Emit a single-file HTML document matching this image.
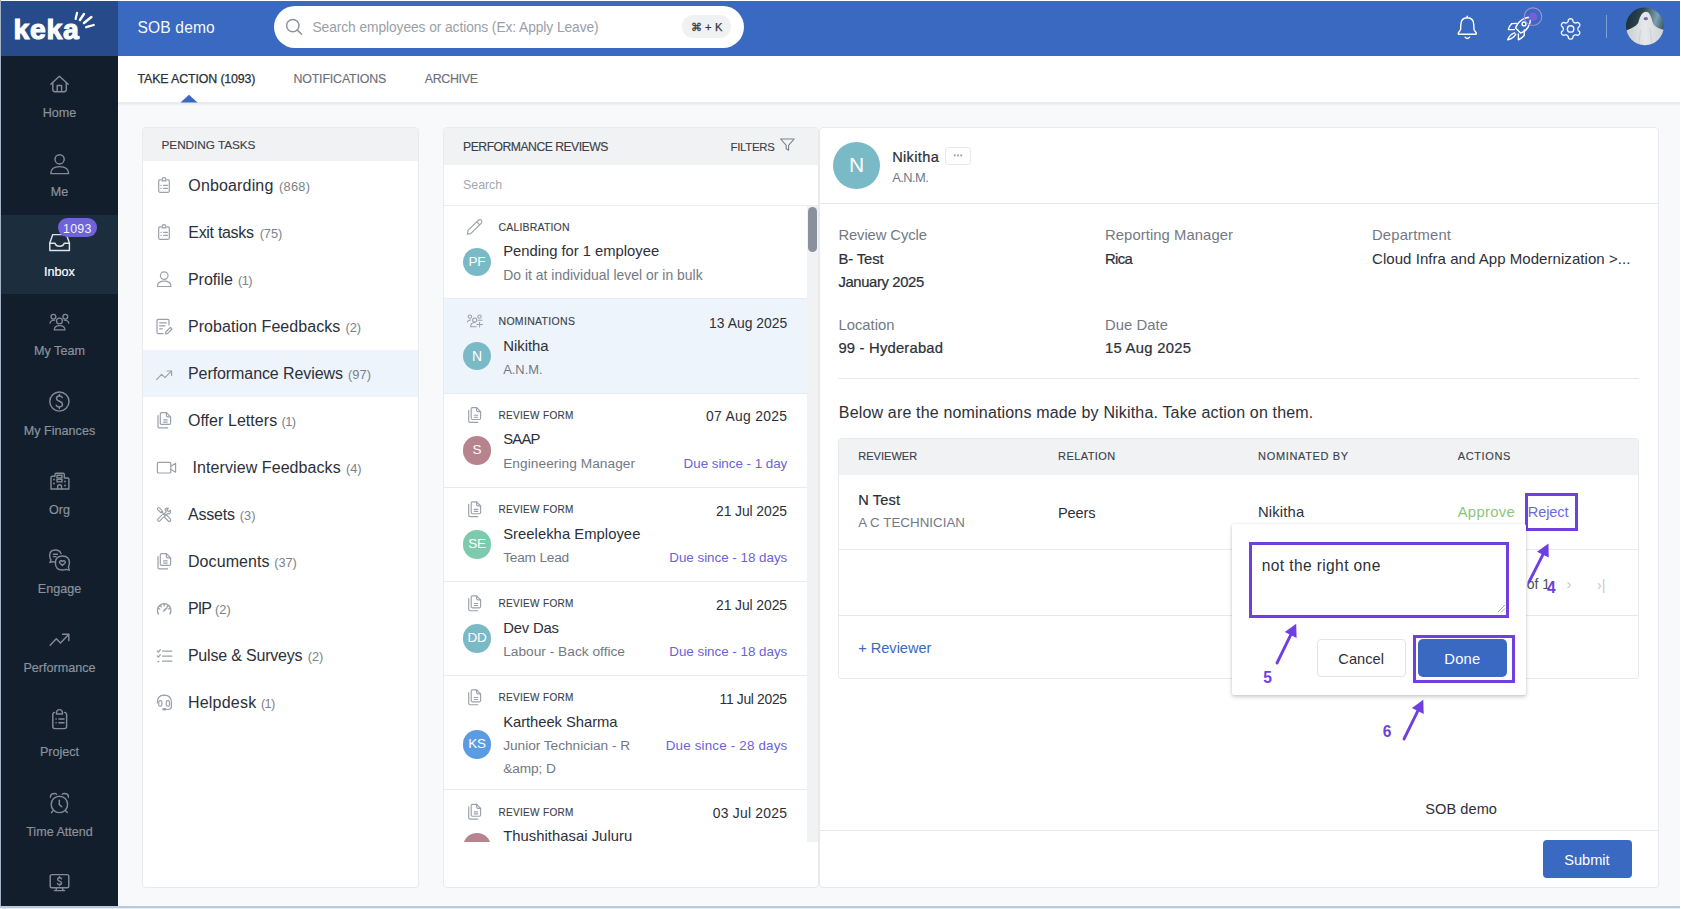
<!DOCTYPE html>
<html><head><meta charset="utf-8">
<style>
*{margin:0;padding:0;box-sizing:border-box}
html,body{width:1681px;height:909px;overflow:hidden;background:#f8f9fa;font-family:"Liberation Sans",sans-serif;color:#2d3039;position:relative}
.a{position:absolute}
.t{position:absolute;white-space:nowrap}
svg.a{overflow:visible}
</style></head><body>
<div class="a" style="left:1px;top:1px;width:117px;height:55px;background:#264a8a;"></div>
<div class="a" style="left:118px;top:1px;width:1562px;height:55px;background:#3a69c2;"></div>
<div class="t" style="top:19.36px;font-size:28.4px;color:#fff;line-height:20px;font-weight:700;letter-spacing:0.750px;left:13.40px;-webkit-text-stroke:1.1px #fff;">keka</div>
<svg class="a" style="left:70px;top:8px;" width="30" height="24" viewBox="70 8 30 24"><g stroke="#fff" stroke-linecap="round" fill="none"><line x1="77" y1="12.9" x2="75.6" y2="18.9" stroke-width="2.2"/><line x1="84" y1="14" x2="79.9" y2="20" stroke-width="2.4"/><line x1="91.4" y1="17" x2="84" y2="23" stroke-width="2.5"/><line x1="93.7" y1="25" x2="86.2" y2="27.2" stroke-width="2.3"/></g></svg>
<div class="t" style="top:17.89px;font-size:15.6px;color:#f6f8fc;line-height:20px;letter-spacing:0.143px;left:137.50px;">SOB demo</div>
<div class="a" style="left:274px;top:6px;width:470px;height:42px;background:#fff;border-radius:21px;"></div>
<svg class="a" style="left:284px;top:16px;" width="22" height="22" viewBox="284 16 22 22"><g stroke="#8d939c" stroke-width="1.5" fill="none" stroke-linecap="round"><circle cx="292.8" cy="25.6" r="6.2"/><line x1="297.3" y1="30.1" x2="301.6" y2="34.2"/></g></svg>
<div class="t" style="top:18.22px;font-size:13.8px;color:#9aa0a9;line-height:20px;letter-spacing:-0.085px;left:312.50px;">Search employees or actions (Ex: Apply Leave)</div>
<div class="a" style="left:682px;top:15px;width:49px;height:23px;background:#f0f1f3;border-radius:12px;"></div>
<div class="t" style="top:16.92px;font-size:11.2px;color:#33373e;line-height:20px;letter-spacing:0.100px;left:690.80px;-webkit-text-stroke:0.25px currentColor;">&#8984; + K</div>
<svg class="a" style="left:1450px;top:10px;" width="35" height="35" viewBox="1450 10 35 35"><g stroke="#fff" stroke-width="1.4" fill="none" stroke-linecap="round" stroke-linejoin="round"><path d="M1467.3 17.8 C1463 17.8 1460.8 20.6 1460.8 25 L1460.6 29.4 C1460.4 31 1458.2 32 1458.2 33.4 L1458.5 34.2 L1476.1 34.2 L1476.4 33.4 C1476.4 32 1474.2 31 1474 29.4 L1473.8 25 C1473.8 20.6 1471.6 17.8 1467.3 17.8 Z"/><path d="M1467.3 16.3 L1467.3 17.8"/><path d="M1465.1 37.3 Q1467.3 39.5 1469.5 37.3"/></g></svg>
<svg class="a" style="left:1500px;top:8px;" width="50" height="38" viewBox="1500 8 50 38"><g stroke="#fff" stroke-width="1.4" fill="none" stroke-linecap="round" stroke-linejoin="round"><path d="M1530.6 17.2 C1523.6 17 1517 22.6 1515.6 28 L1520.6 33 C1526.2 31.6 1531 25 1530.6 17.2 Z"/><circle cx="1524" cy="23.9" r="1.9"/><path d="M1516.6 23.4 L1511.8 23.6 Q1509 26.4 1508.3 29.6 L1514.4 29.6"/><path d="M1524.3 30 L1524.2 35.4 Q1521.6 38.2 1518.4 39.8 L1518.4 34"/><path d="M1514.6 32.8 Q1509.6 34.2 1507.6 39.9 Q1513.4 38.6 1515.8 34.2"/></g><circle cx="1533" cy="16.7" r="8.8" fill="none" stroke="#b08ec6" stroke-width="1.1"/><circle cx="1533" cy="16.7" r="4.3" fill="#7560dc"/></svg>
<svg class="a" style="left:1555px;top:14px;" width="32" height="32" viewBox="1555 14 32 32"><g stroke="#f2f4f8" stroke-width="1.4" fill="none" stroke-linejoin="round"><path d="M1577.90 28.90 L1577.91 29.09 L1577.93 29.28 L1577.97 29.48 L1578.02 29.68 L1578.09 29.89 L1578.17 30.10 L1578.28 30.32 L1578.42 30.56 L1578.60 30.82 L1579.05 31.16 L1579.49 31.53 L1579.64 31.84 L1579.73 32.13 L1579.78 32.42 L1579.79 32.71 L1579.77 32.98 L1579.73 33.25 L1579.65 33.51 L1579.56 33.76 L1579.43 34.00 L1579.29 34.22 L1579.12 34.43 L1578.93 34.63 L1578.72 34.80 L1578.49 34.96 L1578.24 35.09 L1577.97 35.19 L1577.67 35.26 L1577.33 35.28 L1576.79 35.09 L1576.26 34.87 L1575.95 34.84 L1575.67 34.84 L1575.43 34.86 L1575.20 34.89 L1574.98 34.93 L1574.79 34.99 L1574.60 35.06 L1574.42 35.13 L1574.25 35.22 L1574.09 35.32 L1573.93 35.44 L1573.78 35.57 L1573.63 35.71 L1573.49 35.88 L1573.35 36.06 L1573.21 36.26 L1573.07 36.50 L1572.94 36.79 L1572.86 37.35 L1572.76 37.92 L1572.58 38.20 L1572.37 38.43 L1572.14 38.61 L1571.90 38.76 L1571.65 38.89 L1571.39 38.98 L1571.13 39.05 L1570.87 39.09 L1570.60 39.10 L1570.33 39.09 L1570.07 39.05 L1569.81 38.98 L1569.55 38.89 L1569.30 38.76 L1569.06 38.61 L1568.83 38.43 L1568.62 38.20 L1568.44 37.92 L1568.34 37.35 L1568.26 36.79 L1568.13 36.50 L1567.99 36.26 L1567.85 36.06 L1567.71 35.88 L1567.57 35.71 L1567.42 35.57 L1567.27 35.44 L1567.11 35.32 L1566.95 35.22 L1566.78 35.13 L1566.60 35.06 L1566.41 34.99 L1566.22 34.93 L1566.00 34.89 L1565.77 34.86 L1565.53 34.84 L1565.25 34.84 L1564.94 34.87 L1564.41 35.09 L1563.87 35.28 L1563.53 35.26 L1563.23 35.19 L1562.96 35.09 L1562.71 34.96 L1562.48 34.80 L1562.27 34.63 L1562.08 34.43 L1561.91 34.22 L1561.77 34.00 L1561.64 33.76 L1561.55 33.51 L1561.47 33.25 L1561.43 32.98 L1561.41 32.71 L1561.42 32.42 L1561.47 32.13 L1561.56 31.84 L1561.71 31.53 L1562.15 31.16 L1562.60 30.82 L1562.78 30.56 L1562.92 30.32 L1563.03 30.10 L1563.11 29.89 L1563.18 29.68 L1563.23 29.48 L1563.27 29.28 L1563.29 29.09 L1563.30 28.90 L1563.29 28.71 L1563.27 28.52 L1563.23 28.32 L1563.18 28.12 L1563.11 27.91 L1563.03 27.70 L1562.92 27.48 L1562.78 27.24 L1562.60 26.98 L1562.15 26.64 L1561.71 26.27 L1561.56 25.96 L1561.47 25.67 L1561.42 25.38 L1561.41 25.09 L1561.43 24.82 L1561.47 24.55 L1561.55 24.29 L1561.64 24.04 L1561.77 23.80 L1561.91 23.58 L1562.08 23.37 L1562.27 23.17 L1562.48 23.00 L1562.71 22.84 L1562.96 22.71 L1563.23 22.61 L1563.53 22.54 L1563.87 22.52 L1564.41 22.71 L1564.94 22.93 L1565.25 22.96 L1565.53 22.96 L1565.77 22.94 L1566.00 22.91 L1566.22 22.87 L1566.41 22.81 L1566.60 22.74 L1566.78 22.67 L1566.95 22.58 L1567.11 22.48 L1567.27 22.36 L1567.42 22.23 L1567.57 22.09 L1567.71 21.92 L1567.85 21.74 L1567.99 21.54 L1568.13 21.30 L1568.26 21.01 L1568.34 20.45 L1568.44 19.88 L1568.62 19.60 L1568.83 19.37 L1569.06 19.19 L1569.30 19.04 L1569.55 18.91 L1569.81 18.82 L1570.07 18.75 L1570.33 18.71 L1570.60 18.70 L1570.87 18.71 L1571.13 18.75 L1571.39 18.82 L1571.65 18.91 L1571.90 19.04 L1572.14 19.19 L1572.37 19.37 L1572.58 19.60 L1572.76 19.88 L1572.86 20.45 L1572.94 21.01 L1573.07 21.30 L1573.21 21.54 L1573.35 21.74 L1573.49 21.92 L1573.63 22.09 L1573.78 22.23 L1573.93 22.36 L1574.09 22.48 L1574.25 22.58 L1574.42 22.67 L1574.60 22.74 L1574.79 22.81 L1574.98 22.87 L1575.20 22.91 L1575.43 22.94 L1575.67 22.96 L1575.95 22.96 L1576.26 22.93 L1576.79 22.71 L1577.33 22.52 L1577.67 22.54 L1577.97 22.61 L1578.24 22.71 L1578.49 22.84 L1578.72 23.00 L1578.93 23.17 L1579.12 23.37 L1579.29 23.58 L1579.43 23.80 L1579.56 24.04 L1579.65 24.29 L1579.73 24.55 L1579.77 24.82 L1579.79 25.09 L1579.78 25.38 L1579.73 25.67 L1579.64 25.96 L1579.49 26.27 L1579.05 26.64 L1578.60 26.98 L1578.42 27.24 L1578.28 27.48 L1578.17 27.70 L1578.09 27.91 L1578.02 28.12 L1577.97 28.32 L1577.93 28.52 L1577.91 28.71 Z"/><circle cx="1570.6" cy="28.9" r="3.2"/></g></svg>
<div class="a" style="left:1606px;top:15px;width:1.3px;height:23px;background:#7f9fd9;"></div>
<svg class="a" style="left:1624px;top:5px;" width="42" height="42" viewBox="1624 5 42 42"><defs><clipPath id="avc"><circle cx="1644.9" cy="26.3" r="18.9"/></clipPath><linearGradient id="avg" x1="0" y1="0" x2="1" y2="0.3"><stop offset="0" stop-color="#16252c"/><stop offset="0.45" stop-color="#2b4652"/><stop offset="0.8" stop-color="#7d9fb0"/><stop offset="1" stop-color="#3d5d6c"/></linearGradient><linearGradient id="gh" x1="0" y1="0" x2="1" y2="0"><stop offset="0" stop-color="#c9ccd0"/><stop offset="0.5" stop-color="#e6e8ea"/><stop offset="1" stop-color="#cfd2d6"/></linearGradient></defs><g clip-path="url(#avc)"><rect x="1624" y="5" width="42" height="42" fill="url(#avg)"/><path d="M1625 31 C1631 28.5 1635.5 27 1638.2 23 C1640.2 15 1642.8 11.8 1645.8 11.8 C1648.8 11.8 1650.8 15 1652.2 21 C1653.6 26.5 1657.5 28.6 1665 30 L1665 47 L1625 47 Z" fill="url(#gh)"/><path d="M1640.5 30 L1638.5 46 M1650 28 L1652 46" stroke="#c6c9cd" stroke-width="0.7" fill="none"/><ellipse cx="1645.8" cy="18.7" rx="2.2" ry="1.6" fill="#6f70b0"/></g></svg>
<div class="a" style="left:1px;top:56px;width:117px;height:850px;background:#121e2b;"></div>
<div class="a" style="left:1px;top:215px;width:117px;height:79px;background:#1c2d3e;"></div>
<div class="t" style="top:102.67px;font-size:12.6px;color:#8b929c;line-height:20px;left:-140.5px;width:400px;text-align:center;-webkit-text-stroke:0.2px currentColor;">Home</div>
<div class="t" style="top:182.17px;font-size:12.6px;color:#8b929c;line-height:20px;left:-140.5px;width:400px;text-align:center;-webkit-text-stroke:0.2px currentColor;">Me</div>
<div class="t" style="top:261.67px;font-size:12.6px;color:#ffffff;line-height:20px;left:-140.5px;width:400px;text-align:center;-webkit-text-stroke:0.2px currentColor;">Inbox</div>
<div class="t" style="top:341.17px;font-size:12.6px;color:#8b929c;line-height:20px;left:-140.5px;width:400px;text-align:center;-webkit-text-stroke:0.2px currentColor;">My Team</div>
<div class="t" style="top:420.67px;font-size:12.6px;color:#8b929c;line-height:20px;left:-140.5px;width:400px;text-align:center;-webkit-text-stroke:0.2px currentColor;">My Finances</div>
<div class="t" style="top:499.67px;font-size:12.6px;color:#8b929c;line-height:20px;left:-140.5px;width:400px;text-align:center;-webkit-text-stroke:0.2px currentColor;">Org</div>
<div class="t" style="top:579.17px;font-size:12.6px;color:#8b929c;line-height:20px;left:-140.5px;width:400px;text-align:center;-webkit-text-stroke:0.2px currentColor;">Engage</div>
<div class="t" style="top:658.37px;font-size:12.6px;color:#8b929c;line-height:20px;left:-140.5px;width:400px;text-align:center;-webkit-text-stroke:0.2px currentColor;">Performance</div>
<div class="t" style="top:742.47px;font-size:12.6px;color:#8b929c;line-height:20px;left:-140.5px;width:400px;text-align:center;-webkit-text-stroke:0.2px currentColor;">Project</div>
<div class="t" style="top:821.87px;font-size:12.6px;color:#8b929c;line-height:20px;left:-140.5px;width:400px;text-align:center;-webkit-text-stroke:0.2px currentColor;">Time Attend</div>
<svg class="a" style="left:40px;top:60px;" width="40" height="840" viewBox="40 60 40 840"><g stroke="#838a95" stroke-width="1.45" fill="none" stroke-linecap="round" stroke-linejoin="round"><path d="M50.8 84.2 L59.4 76.3 L68.2 84.2"/><path d="M52.8 82.5 L52.8 89.6 Q52.8 91.7 54.9 91.7 L64.2 91.7 Q66.3 91.7 66.3 89.6 L66.3 82.5"/><path d="M57.2 91.5 L57.2 85.4 L61.6 85.4 L61.6 91.5"/></g><g stroke="#838a95" stroke-width="1.45" fill="none" stroke-linecap="round" stroke-linejoin="round"><circle cx="59.6" cy="159.3" r="4.6"/><path d="M50.8 173.6 Q50.8 166.6 59.6 166.6 Q68.6 166.6 68.6 173.6 Z"/></g><g stroke="#dfe2e6" stroke-width="1.45" fill="none" stroke-linecap="round" stroke-linejoin="round"><path d="M52.8 234.6 L66.4 234.6 L69.4 243 L69.4 250.5 L49.8 250.5 L49.8 243 Z"/><path d="M49.8 243.2 L55 243.2 Q55.8 246.2 59.6 246.2 Q63.4 246.2 64.2 243.2 L69.4 243.2"/></g><g stroke="#838a95" stroke-width="1.3" fill="none" stroke-linecap="round"><circle cx="53.4" cy="316.7" r="2.4"/><circle cx="65.3" cy="316.7" r="2.4"/><circle cx="59.4" cy="321" r="2.9"/><path d="M54.3 329.9 Q54.3 325.6 59.6 325.6 Q64.9 325.6 64.9 329.9 Z"/><path d="M50 323 Q50.6 320.3 54.6 320.2"/><path d="M68.8 323 Q68.2 320.3 64.2 320.2"/></g><g stroke="#838a95" stroke-width="1.45" fill="none" stroke-linecap="round" stroke-linejoin="round"><circle cx="59.4" cy="401.5" r="9.6"/><path d="M62.3 397.6 Q61.8 396 59.4 396 Q56.5 396 56.5 398.3 Q56.5 400.4 59.4 401.3 Q62.5 402.3 62.5 404.6 Q62.5 406.9 59.4 406.9 Q56.9 406.9 56.3 405.2"/><path d="M59.4 394.5 L59.4 396"/><path d="M59.4 406.9 L59.4 408.4"/></g><g stroke="#838a95" stroke-width="1.4" fill="none" stroke-linecap="round" stroke-linejoin="round"><path d="M51 489 L51 477.6 Q51 476.3 52.3 476.3 L55 476.3 L55 474.3 Q55 473.2 56.2 473.2 L63.2 473.2 Q64.3 473.2 64.3 474.3 L64.3 478 L67.6 478 Q68.9 478 68.9 479.3 L68.9 489 Z"/><rect x="57" y="475.3" width="5" height="2.6"/><rect x="57" y="479.3" width="5" height="2.6"/><path d="M57.7 489 L57.7 485.6 Q59.6 484 61.5 485.6 L61.5 489"/></g><g fill="#838a95"><circle cx="54" cy="479.5" r="0.9"/><circle cx="54" cy="483.5" r="0.9"/><circle cx="65" cy="481.5" r="0.9"/><circle cx="65" cy="485.5" r="0.9"/></g><g stroke="#838a95" stroke-width="1.4" fill="none" stroke-linecap="round" stroke-linejoin="round"><path d="M61 553.5 Q59.8 550 55.3 550 Q49.7 550 49.7 555.5 Q49.7 558 51 560 L49.9 562.5 L53 561.6 Q54.5 562.2 55.5 562.2"/><path d="M53.4 554.3 L57.4 554.3 M53.4 556.6 L56 556.6"/><path d="M69.4 563 Q69.4 556 62.4 556 Q55.4 556 55.4 563 Q55.4 570 62.4 570 Q64.4 570 66 569.3 L69.2 570.2 L68.4 567 Q69.4 565 69.4 563 Z"/><path d="M62.4 565.5 L59.8 563 Q59 561.4 60.5 560.8 Q61.6 560.5 62.4 561.5 Q63.2 560.5 64.3 560.8 Q65.8 561.4 65 563 Z"/></g><g stroke="#838a95" stroke-width="1.45" fill="none" stroke-linecap="round" stroke-linejoin="round"><path d="M50.2 645.3 L56.3 638.8 L60.5 643 L68.6 634.5"/><path d="M62.6 634.2 L68.8 634.2 L68.8 640.6"/></g><g stroke="#838a95" stroke-width="1.45" fill="none" stroke-linecap="round" stroke-linejoin="round"><path d="M54.6 712.4 Q52.8 712.6 52.8 714.8 L52.8 726.6 Q52.8 728.6 54.8 728.6 L64.6 728.6 Q66.6 728.6 66.6 726.6 L66.6 714.8 Q66.6 712.6 64.6 712.4"/><path d="M56.5 714 L62.5 714 L62.5 712.8 Q62.4 709.6 59.5 709.6 Q56.6 709.6 56.5 712.8 Z"/><path d="M56 719 L56.2 719 M58.9 719 L64 719 M56 722.7 L56.2 722.7 M58.9 722.7 L64 722.7"/></g><g stroke="#838a95" stroke-width="1.45" fill="none" stroke-linecap="round" stroke-linejoin="round"><circle cx="59.4" cy="804.4" r="8.2"/><path d="M59.3 800.2 L59.3 804.6 L61.8 806.7"/><path d="M50.4 797.3 Q50.3 793.4 54.8 793.4 Q55.8 793.5 56.6 794.2"/><path d="M68.5 797.3 Q68.6 793.4 64.1 793.4 Q63.1 793.5 62.3 794.2"/><path d="M53.4 810.6 L51.5 812.6 M65.4 810.6 L67.3 812.6"/></g><g stroke="#838a95" stroke-width="1.45" fill="none" stroke-linecap="round" stroke-linejoin="round"><rect x="50.2" y="874.6" width="18.6" height="13.2" rx="1.8"/><path d="M56.6 888 L56 890.5 M62.4 888 L63 890.5 M54.4 890.6 L64.6 890.6"/><path d="M61.5 878.8 Q61 877.8 59.5 877.8 Q57.6 877.8 57.6 879.3 Q57.6 880.7 59.5 881.1 Q61.5 881.6 61.5 883 Q61.5 884.5 59.5 884.5 Q57.9 884.5 57.4 883.5 M59.5 876.6 L59.5 877.8 M59.5 884.5 L59.5 885.7"/></g></svg>
<div class="a" style="left:58.3px;top:218.2px;width:38.6px;height:18.6px;background:#6f62dc;border-radius:9.3px;"></div>
<div class="t" style="top:219.00px;font-size:12.4px;color:#f4f4fb;line-height:20px;letter-spacing:0.203px;left:63.10px;">1093</div>
<div class="a" style="left:118px;top:102px;width:1562px;height:4px;background:linear-gradient(#eaebed,#e9eaec 35%,#f8f9fa);"></div>
<div class="a" style="left:118px;top:56px;width:1562px;height:46px;background:#fff;"></div>
<div class="t" style="top:68.90px;font-size:12.4px;color:#2b2f36;line-height:20px;letter-spacing:-0.139px;left:137.60px;-webkit-text-stroke:0.25px currentColor;">TAKE ACTION (1093)</div>
<div class="t" style="top:68.90px;font-size:12.4px;color:#6b717b;line-height:20px;letter-spacing:-0.153px;left:293.40px;-webkit-text-stroke:0.15px currentColor;">NOTIFICATIONS</div>
<div class="t" style="top:68.90px;font-size:12.4px;color:#6b717b;line-height:20px;letter-spacing:-0.303px;left:424.70px;-webkit-text-stroke:0.15px currentColor;">ARCHIVE</div>
<svg class="a" style="left:178px;top:92px;" width="22" height="12" viewBox="178 92 22 12"><path d="M180.5 102.5 L189 94.8 L197.5 102.5 Z" fill="#3a69c2"/></svg>
<div class="a" style="left:142px;top:127px;width:277px;height:761px;background:#fff;border:1px solid #e9eaee;border-radius:4px;"></div>
<div class="a" style="left:143px;top:128px;width:275px;height:33px;background:#f1f2f4;border-radius:3px 3px 0 0;"></div>
<div class="t" style="top:135.11px;font-size:11.8px;color:#3a3f48;line-height:20px;letter-spacing:-0.054px;left:161.50px;-webkit-text-stroke:0.12px currentColor;">PENDING TASKS</div>
<div class="a" style="left:143px;top:350px;width:275px;height:47px;background:#eef4fc;"></div>
<div class="t" style="top:175.86px;font-size:16px;color:#2d3039;line-height:20px;letter-spacing:0.154px;left:188.30px;">Onboarding</div>
<div class="t" style="top:176.96px;font-size:12.8px;color:#7b818b;line-height:20px;letter-spacing:0.278px;left:279.00px;">(868)</div>
<div class="t" style="top:222.86px;font-size:16px;color:#2d3039;line-height:20px;letter-spacing:-0.307px;left:188.30px;">Exit tasks</div>
<div class="t" style="top:223.96px;font-size:12.8px;color:#7b818b;line-height:20px;letter-spacing:-0.086px;left:259.70px;">(75)</div>
<div class="t" style="top:269.86px;font-size:16px;color:#2d3039;line-height:20px;letter-spacing:-0.060px;left:188.00px;">Profile</div>
<div class="t" style="top:270.96px;font-size:12.8px;color:#7b818b;line-height:20px;letter-spacing:-0.600px;left:238.00px;">(1)</div>
<div class="t" style="top:316.86px;font-size:16px;color:#2d3039;line-height:20px;letter-spacing:0.061px;left:188.00px;">Probation Feedbacks</div>
<div class="t" style="top:317.96px;font-size:12.8px;color:#7b818b;line-height:20px;letter-spacing:-0.071px;left:345.50px;">(2)</div>
<div class="t" style="top:363.86px;font-size:16px;color:#2d3039;line-height:20px;letter-spacing:-0.083px;left:188.00px;">Performance Reviews</div>
<div class="t" style="top:364.96px;font-size:12.8px;color:#7b818b;line-height:20px;letter-spacing:0.114px;left:347.90px;">(97)</div>
<div class="t" style="top:410.86px;font-size:16px;color:#2d3039;line-height:20px;letter-spacing:0.055px;left:187.90px;">Offer Letters</div>
<div class="t" style="top:411.96px;font-size:12.8px;color:#7b818b;line-height:20px;letter-spacing:-0.600px;left:281.60px;">(1)</div>
<div class="t" style="top:457.86px;font-size:16px;color:#2d3039;line-height:20px;letter-spacing:0.076px;left:192.60px;">Interview Feedbacks</div>
<div class="t" style="top:458.96px;font-size:12.8px;color:#7b818b;line-height:20px;letter-spacing:-0.121px;left:346.00px;">(4)</div>
<div class="t" style="top:504.86px;font-size:16px;color:#2d3039;line-height:20px;letter-spacing:-0.163px;left:187.90px;">Assets</div>
<div class="t" style="top:505.96px;font-size:12.8px;color:#7b818b;line-height:20px;letter-spacing:-0.021px;left:239.80px;">(3)</div>
<div class="t" style="top:551.86px;font-size:16px;color:#2d3039;line-height:20px;letter-spacing:0.097px;left:187.90px;">Documents</div>
<div class="t" style="top:552.96px;font-size:12.8px;color:#7b818b;line-height:20px;letter-spacing:-0.086px;left:274.30px;">(37)</div>
<div class="t" style="top:598.86px;font-size:16px;color:#2d3039;line-height:20px;letter-spacing:-0.900px;left:187.90px;">PIP</div>
<div class="t" style="top:599.96px;font-size:12.8px;color:#7b818b;line-height:20px;letter-spacing:-0.021px;left:215.10px;">(2)</div>
<div class="t" style="top:645.86px;font-size:16px;color:#2d3039;line-height:20px;letter-spacing:-0.191px;left:187.90px;">Pulse &amp; Surveys</div>
<div class="t" style="top:646.96px;font-size:12.8px;color:#7b818b;line-height:20px;letter-spacing:-0.021px;left:307.70px;">(2)</div>
<div class="t" style="top:692.86px;font-size:16px;color:#2d3039;line-height:20px;letter-spacing:0.223px;left:187.90px;">Helpdesk</div>
<div class="t" style="top:693.96px;font-size:12.8px;color:#7b818b;line-height:20px;letter-spacing:-0.600px;left:260.90px;">(1)</div>
<svg class="a" style="left:150px;top:170px;" width="30" height="550" viewBox="150 170 30 550"><g stroke="#9ba1ab" stroke-width="1.2" fill="none" stroke-linecap="round" stroke-linejoin="round"><path d="M161 179.9 L159.8 179.9 Q158.7 179.9 158.7 181.0 L158.7 191.10000000000002 Q158.7 192.3 159.9 192.3 L168.1 192.3 Q169.3 192.3 169.3 191.10000000000002 L169.3 181.0 Q169.3 179.9 168.2 179.9 L167 179.9"/><path d="M162.2 180.9 L165.8 180.9 L165.8 179.1 Q165.8 177.7 164 177.7 Q162.2 177.7 162.2 179.1 Z"/><path d="M160.9 185.3 L161.2 185.3 M163.6 185.3 L167.5 185.3 M160.9 188.3 L161.2 188.3 M163.6 188.3 L167.5 188.3"/></g><g stroke="#9ba1ab" stroke-width="1.2" fill="none" stroke-linecap="round" stroke-linejoin="round"><path d="M161 226.9 L159.8 226.9 Q158.7 226.9 158.7 228.0 L158.7 238.10000000000002 Q158.7 239.3 159.9 239.3 L168.1 239.3 Q169.3 239.3 169.3 238.10000000000002 L169.3 228.0 Q169.3 226.9 168.2 226.9 L167 226.9"/><path d="M162.2 227.9 L165.8 227.9 L165.8 226.1 Q165.8 224.7 164 224.7 Q162.2 224.7 162.2 226.1 Z"/><path d="M160.9 232.3 L161.2 232.3 M163.6 232.3 L167.5 232.3 M160.9 235.3 L161.2 235.3 M163.6 235.3 L167.5 235.3"/></g><g stroke="#9ba1ab" stroke-width="1.2" fill="none" stroke-linecap="round" stroke-linejoin="round"><circle cx="164.2" cy="275.6" r="3.8"/><path d="M157.4 286.5 Q157.4 281.2 164.2 281.2 Q171 281.2 171 286.5 Z"/></g><g stroke="#9ba1ab" stroke-width="1.2" fill="none" stroke-linecap="round" stroke-linejoin="round"><path d="M169 325 L169 320.6 Q169 319.4 167.8 319.4 L158.2 319.4 Q157 319.4 157 320.6 L157 332.4 Q157 333.6 158.2 333.6 L163 333.6"/><path d="M159.6 322.8 L166.4 322.8 M159.6 325.8 L165 325.8 M159.6 328.8 L162.4 328.8"/><path d="M165.4 334 L165.8 332 L170.4 327.4 L172 329 L167.4 333.6 Z"/></g><g stroke="#9ba1ab" stroke-width="1.2" fill="none" stroke-linecap="round" stroke-linejoin="round"><path d="M156.6 379.6 L161.6 374.4 L165 377.6 L171.4 371.2"/><path d="M167 371 L171.6 371 L171.6 375.6"/></g><g stroke="#9ba1ab" stroke-width="1.2" fill="none" stroke-linecap="round" stroke-linejoin="round"><path d="M160.3 423.2 L160.3 413.9 Q160.3 412.7 161.5 412.7 L166.4 412.7 L170.6 416.9 L170.6 423.2 Q170.6 424.4 169.4 424.4 L161.5 424.4 Q160.3 424.4 160.3 423.2 Z"/><path d="M166.4 412.7 L166.4 415.5 Q166.4 416.9 167.8 416.9 L170.6 416.9"/><path d="M158 415.5 L158 426.5 Q158 427.8 159.4 427.8 L167.6 427.8"/><path d="M163.7 419.9 L167.2 419.9 M163.7 422.1 L167.2 422.1"/></g><g stroke="#9ba1ab" stroke-width="1.2" fill="none" stroke-linecap="round" stroke-linejoin="round"><path d="M160.3 564.1999999999999 L160.3 554.9000000000001 Q160.3 553.7 161.5 553.7 L166.4 553.7 L170.6 557.9000000000001 L170.6 564.1999999999999 Q170.6 565.4 169.4 565.4 L161.5 565.4 Q160.3 565.4 160.3 564.1999999999999 Z"/><path d="M166.4 553.7 L166.4 556.5 Q166.4 557.9000000000001 167.8 557.9000000000001 L170.6 557.9000000000001"/><path d="M158 556.5 L158 567.5 Q158 568.8 159.4 568.8 L167.6 568.8"/><path d="M163.7 560.9 L167.2 560.9 M163.7 563.1 L167.2 563.1"/></g><g stroke="#9ba1ab" stroke-width="1.2" fill="none" stroke-linecap="round" stroke-linejoin="round"><rect x="157.4" y="462.4" width="13.4" height="10.6" rx="1"/><path d="M170.8 466.2 L175.6 463.2 L175.6 472.2 L170.8 469.2"/></g><g stroke="#9ba1ab" stroke-linecap="round" fill="none"><line x1="158.7" y1="508.8" x2="161.3" y2="511.4" stroke-width="3.6"/><line x1="158.7" y1="508.8" x2="161.3" y2="511.4" stroke="#fff" stroke-width="1.3"/><line x1="161.6" y1="511.7" x2="164.4" y2="514.5" stroke-width="1.2"/><line x1="165.4" y1="516" x2="169.3" y2="519.9" stroke-width="4.2"/><line x1="165.4" y1="516" x2="169.3" y2="519.9" stroke="#fff" stroke-width="1.8"/><line x1="158.9" y1="519.9" x2="162.8" y2="516" stroke-width="3.8"/><line x1="158.9" y1="519.9" x2="163.4" y2="515.4" stroke="#fff" stroke-width="1.5"/><path d="M163.6 514.4 L166.2 511.8 Q164.6 509.6 165.4 508.6 Q166.4 507.8 168.4 508.3 L166.8 510 L168.4 511.7 L170.2 510.2 Q171 512.2 170 513.3 Q168.8 514.3 167.4 513.6 L165.4 515.8" stroke-width="1.15" stroke-linejoin="round"/></g><g stroke="#9ba1ab" fill="none" stroke-linecap="round"><path d="M158.4 613.8 A6.7 6.7 0 1 1 170 613.8" stroke-width="1.5"/><path d="M159.78 608.99 L158.00 608.34 M161.31 606.90 L160.14 605.40 M164.20 605.90 L164.20 604.00 M167.09 606.90 L168.26 605.40 M168.62 608.99 L170.40 608.34 " stroke-width="1.3"/><line x1="163.8" y1="610.8" x2="166.8" y2="608" stroke-width="1.7"/></g><g stroke="#9ba1ab" stroke-width="1.2" fill="none" stroke-linecap="round" stroke-linejoin="round"><path d="M157.2 650.8 L158.4 652 L160.4 649.6 M157.2 655.8 L158.4 657 L160.4 654.6 M157.8 661.6 L158.8 661.6"/><path d="M162.6 651.2 L171.8 651.2 M162.6 656.2 L171.8 656.2 M162.6 661.2 L171.8 661.2"/></g><g stroke="#9ba1ab" stroke-width="1.2" fill="none" stroke-linecap="round" stroke-linejoin="round"><path d="M157.3 703 Q157 695.4 164.2 695.2 Q171.4 695.4 171.4 702.4 L171.4 706.6 Q171.4 709.4 168.4 709.5 L166.6 709.5"/><rect x="158.7" y="700.7" width="3.2" height="5.5" rx="1.5"/><rect x="166.3" y="700.7" width="3.2" height="5.5" rx="1.5"/></g><ellipse cx="164.4" cy="709.2" rx="2.3" ry="1.3" fill="#9ba1ab"/></svg>
<div class="a" style="left:443px;top:127px;width:376px;height:761px;background:#fff;border:1px solid #e9eaee;border-radius:4px;"></div>
<div class="a" style="left:444px;top:128px;width:374px;height:37px;background:#f1f2f4;border-radius:3px 3px 0 0;"></div>
<div class="t" style="top:136.97px;font-size:12.2px;color:#3a3f48;line-height:20px;letter-spacing:-0.508px;left:463.10px;-webkit-text-stroke:0.12px currentColor;">PERFORMANCE REVIEWS</div>
<div class="t" style="top:137.25px;font-size:11.4px;color:#3a3f48;line-height:20px;letter-spacing:-0.272px;left:730.50px;-webkit-text-stroke:0.12px currentColor;">FILTERS</div>
<svg class="a" style="left:778px;top:136px;" width="18" height="16" viewBox="778 136 18 16"><path d="M780.6 139 L794.2 139 L788.6 145.4 L788.6 150.2 L786.2 148.8 L786.2 145.4 Z" fill="none" stroke="#7b818b" stroke-width="1.1" stroke-linejoin="round"/></svg>
<div class="t" style="top:175.40px;font-size:12.4px;color:#a3a8b1;line-height:20px;letter-spacing:-0.057px;left:463.10px;">Search</div>
<div class="a" style="left:444px;top:205px;width:374px;height:1px;background:#eceef1;"></div>
<div class="a" style="left:807px;top:206px;width:11px;height:636px;background:#f1f2f4;"></div>
<div class="a" style="left:808px;top:207px;width:9px;height:44.5px;background:#8a909c;border-radius:4.5px;"></div>
<div class="a" style="left:444px;top:299px;width:363px;height:94.5px;background:#eef4fc;"></div>
<div class="a" style="left:444px;top:298px;width:363px;height:1px;background:#e9ebee;"></div>
<div class="a" style="left:444px;top:393px;width:363px;height:1px;background:#e9ebee;"></div>
<div class="a" style="left:444px;top:487px;width:363px;height:1px;background:#e9ebee;"></div>
<div class="a" style="left:444px;top:581px;width:363px;height:1px;background:#e9ebee;"></div>
<div class="a" style="left:444px;top:675px;width:363px;height:1px;background:#e9ebee;"></div>
<div class="a" style="left:444px;top:789px;width:363px;height:1px;background:#e9ebee;"></div>
<svg class="a" style="left:464px;top:217px;" width="22" height="20" viewBox="464 217 22 20"><g stroke="#9ba1ab" stroke-width="1.15" fill="none" stroke-linecap="round" stroke-linejoin="round"><path d="M467.4 234.3 L468 230.4 L478.4 220.2 Q480 219 481.3 220.2 Q482.5 221.6 481.3 223.1 L471 233.4 Z"/><path d="M476.8 221.9 L479.7 224.8"/></g></svg>
<div class="t" style="top:217.16px;font-size:10.5px;color:#3a3f48;line-height:20px;letter-spacing:0.176px;left:498.50px;-webkit-text-stroke:0.12px currentColor;">CALIBRATION</div>
<div class="t" style="top:241.47px;font-size:14.8px;color:#2d3039;line-height:20px;letter-spacing:-0.016px;left:503.20px;">Pending for 1 employee</div>
<div class="t" style="top:264.88px;font-size:13.9px;color:#737984;line-height:20px;letter-spacing:0.029px;left:503.20px;">Do it at individual level or in bulk</div>
<div class="a" style="left:462.8px;top:248.1px;width:28.4px;height:28.4px;border-radius:50%;background:#7ab9c6;color:#fff;font-size:13.5px;line-height:28.4px;text-align:center;letter-spacing:-0.2px">PF</div>
<svg class="a" style="left:464px;top:312px;" width="20" height="18" viewBox="464 312 20 18"><g stroke="#9ba1ab" stroke-width="1.05" fill="none" stroke-linecap="round" stroke-linejoin="round"><circle cx="469.9" cy="316.6" r="1.7"/><circle cx="479.5" cy="316.6" r="1.7"/><circle cx="474.7" cy="320" r="2.1"/><path d="M467.4 322 Q467.8 320 470.6 319.9"/><path d="M478.2 320.2 L482 320.2"/><path d="M476.2 326.8 L470.6 326.8 Q470.6 322.8 474.7 322.6"/><path d="M479.6 322.2 L479.6 327 M476.9 324.4 L482.6 324.4"/></g></svg>
<div class="t" style="top:311.16px;font-size:10.5px;color:#3a3f48;line-height:20px;letter-spacing:0.310px;left:498.50px;-webkit-text-stroke:0.12px currentColor;">NOMINATIONS</div>
<div class="t" style="top:312.58px;font-size:13.9px;color:#2d3039;line-height:20px;letter-spacing:0.012px;right:893.79px;">13 Aug 2025</div>
<div class="t" style="top:335.64px;font-size:14.9px;color:#2d3039;line-height:20px;letter-spacing:-0.011px;left:503.20px;">Nikitha</div>
<div class="t" style="top:360.13px;font-size:12.9px;color:#737984;line-height:20px;letter-spacing:-0.004px;left:503.20px;">A.N.M.</div>
<div class="a" style="left:462.8px;top:342.1px;width:28.4px;height:28.4px;border-radius:50%;background:#7ab9c6;color:#fff;font-size:14px;line-height:28.4px;text-align:center;letter-spacing:-0.2px">N</div>
<div class="t" style="top:406.13px;font-size:10px;color:#3a3f48;line-height:20px;letter-spacing:0.333px;left:498.40px;-webkit-text-stroke:0.12px currentColor;">REVIEW FORM</div>
<div class="t" style="top:406.48px;font-size:13.9px;color:#2d3039;line-height:20px;letter-spacing:0.292px;right:893.71px;">07 Aug 2025</div>
<div class="t" style="top:429.47px;font-size:14.8px;color:#2d3039;line-height:20px;letter-spacing:-0.729px;left:503.20px;">SAAP</div>
<div class="t" style="top:453.85px;font-size:13.7px;color:#737984;line-height:20px;letter-spacing:0.056px;left:503.20px;">Engineering Manager</div>
<div class="t" style="top:453.96px;font-size:13.4px;color:#6b63d6;line-height:20px;letter-spacing:-0.030px;right:893.73px;">Due since - 1 day</div>
<div class="a" style="left:462.8px;top:436.4px;width:28.4px;height:28.4px;border-radius:50%;background:#b6838e;color:#fff;font-size:13.5px;line-height:28.4px;text-align:center;letter-spacing:-0.2px">S</div>
<div class="t" style="top:500.33px;font-size:10px;color:#3a3f48;line-height:20px;letter-spacing:0.333px;left:498.40px;-webkit-text-stroke:0.12px currentColor;">REVIEW FORM</div>
<div class="t" style="top:500.68px;font-size:13.9px;color:#2d3039;line-height:20px;letter-spacing:-0.088px;right:894.09px;">21 Jul 2025</div>
<div class="t" style="top:523.67px;font-size:14.8px;color:#2d3039;line-height:20px;letter-spacing:0.037px;left:503.20px;">Sreelekha Employee</div>
<div class="t" style="top:548.05px;font-size:13.7px;color:#737984;line-height:20px;letter-spacing:-0.211px;left:503.20px;">Team Lead</div>
<div class="t" style="top:548.16px;font-size:13.4px;color:#6b63d6;line-height:20px;letter-spacing:-0.018px;right:893.72px;">Due since - 18 days</div>
<div class="a" style="left:462.8px;top:530.4px;width:28.4px;height:28.4px;border-radius:50%;background:#7dcaae;color:#fff;font-size:13.5px;line-height:28.4px;text-align:center;letter-spacing:-0.2px">SE</div>
<div class="t" style="top:594.43px;font-size:10px;color:#3a3f48;line-height:20px;letter-spacing:0.333px;left:498.40px;-webkit-text-stroke:0.12px currentColor;">REVIEW FORM</div>
<div class="t" style="top:594.78px;font-size:13.9px;color:#2d3039;line-height:20px;letter-spacing:-0.088px;right:894.09px;">21 Jul 2025</div>
<div class="t" style="top:617.77px;font-size:14.8px;color:#2d3039;line-height:20px;letter-spacing:-0.157px;left:503.20px;">Dev Das</div>
<div class="t" style="top:642.15px;font-size:13.7px;color:#737984;line-height:20px;letter-spacing:0.016px;left:503.20px;">Labour - Back office</div>
<div class="t" style="top:642.26px;font-size:13.4px;color:#6b63d6;line-height:20px;letter-spacing:-0.018px;right:893.72px;">Due since - 18 days</div>
<div class="a" style="left:462.8px;top:624.4px;width:28.4px;height:28.4px;border-radius:50%;background:#7ab9c6;color:#fff;font-size:13.5px;line-height:28.4px;text-align:center;letter-spacing:-0.2px">DD</div>
<div class="t" style="top:688.43px;font-size:10px;color:#3a3f48;line-height:20px;letter-spacing:0.333px;left:498.40px;-webkit-text-stroke:0.12px currentColor;">REVIEW FORM</div>
<div class="t" style="top:688.78px;font-size:13.9px;color:#2d3039;line-height:20px;letter-spacing:-0.335px;right:894.33px;">11 Jul 2025</div>
<div class="t" style="top:711.77px;font-size:14.8px;color:#2d3039;line-height:20px;letter-spacing:-0.056px;left:503.20px;">Kartheek Sharma</div>
<div class="t" style="top:736.15px;font-size:13.7px;color:#737984;line-height:20px;letter-spacing:-0.034px;left:503.20px;">Junior Technician - R</div>
<div class="t" style="top:736.26px;font-size:13.4px;color:#6b63d6;line-height:20px;letter-spacing:0.182px;right:893.52px;">Due since - 28 days</div>
<div class="t" style="top:758.65px;font-size:13.7px;color:#737984;line-height:20px;letter-spacing:-0.099px;left:503.20px;">&amp;amp; D</div>
<div class="a" style="left:462.8px;top:730.2px;width:28.4px;height:28.4px;border-radius:50%;background:#5b9be1;color:#fff;font-size:13.5px;line-height:28.4px;text-align:center;letter-spacing:-0.2px">KS</div>
<div class="a" style="left:444px;top:790px;width:363px;height:52px;overflow:hidden"><div class="a" style="left:-444px;top:-790px;width:1681px;height:909px"><div class="t" style="top:802.73px;font-size:10px;color:#3a3f48;line-height:20px;letter-spacing:0.333px;left:498.40px;-webkit-text-stroke:0.12px currentColor;">REVIEW FORM</div>
<div class="t" style="top:803.18px;font-size:13.9px;color:#2d3039;line-height:20px;letter-spacing:0.242px;right:893.76px;">03 Jul 2025</div>
<div class="t" style="top:825.87px;font-size:14.8px;color:#2d3039;line-height:20px;letter-spacing:0.037px;left:503.20px;">Thushithasai Juluru</div>
<div class="a" style="left:462.8px;top:833.1px;width:28.4px;height:28.4px;border-radius:50%;background:#b6838e;color:#fff;font-size:13.5px;line-height:28.4px;text-align:center;letter-spacing:-0.2px"></div>
</div></div>
<svg class="a" style="left:464px;top:400px;" width="22" height="430" viewBox="464 400 22 430"><g stroke="#9ba1ab" stroke-width="1.15" fill="none" stroke-linecap="round" stroke-linejoin="round"><path d="M471.2 418.3 L471.2 408.79999999999995 Q471.2 407.59999999999997 472.4 407.59999999999997 L476.6 407.59999999999997 L480.6 411.59999999999997 L480.6 418.3 Q480.6 419.5 479.4 419.5 L472.4 419.5 Q471.2 419.5 471.2 418.3 Z"/><path d="M476.6 407.59999999999997 L476.6 410.2 Q476.6 411.59999999999997 478 411.59999999999997 L480.6 411.59999999999997"/><path d="M468.7 410.2 L468.7 421.0 Q468.7 422.4 470.1 422.4 L477.8 422.4"/><path d="M474.2 415.2 L477.7 415.2 M474.2 417.2 L477.7 417.2"/></g><g stroke="#9ba1ab" stroke-width="1.15" fill="none" stroke-linecap="round" stroke-linejoin="round"><path d="M471.2 512.4999999999999 L471.2 502.99999999999994 Q471.2 501.79999999999995 472.4 501.79999999999995 L476.6 501.79999999999995 L480.6 505.79999999999995 L480.6 512.4999999999999 Q480.6 513.6999999999999 479.4 513.6999999999999 L472.4 513.6999999999999 Q471.2 513.6999999999999 471.2 512.4999999999999 Z"/><path d="M476.6 501.79999999999995 L476.6 504.4 Q476.6 505.79999999999995 478 505.79999999999995 L480.6 505.79999999999995"/><path d="M468.7 504.4 L468.7 515.1999999999999 Q468.7 516.5999999999999 470.1 516.5999999999999 L477.8 516.5999999999999"/><path d="M474.2 509.4 L477.7 509.4 M474.2 511.4 L477.7 511.4"/></g><g stroke="#9ba1ab" stroke-width="1.15" fill="none" stroke-linecap="round" stroke-linejoin="round"><path d="M471.2 606.6 L471.2 597.1000000000001 Q471.2 595.9000000000001 472.4 595.9000000000001 L476.6 595.9000000000001 L480.6 599.9000000000001 L480.6 606.6 Q480.6 607.8000000000001 479.4 607.8000000000001 L472.4 607.8000000000001 Q471.2 607.8000000000001 471.2 606.6 Z"/><path d="M476.6 595.9000000000001 L476.6 598.5000000000001 Q476.6 599.9000000000001 478 599.9000000000001 L480.6 599.9000000000001"/><path d="M468.7 598.5 L468.7 609.3000000000001 Q468.7 610.7 470.1 610.7 L477.8 610.7"/><path d="M474.2 603.5 L477.7 603.5 M474.2 605.5 L477.7 605.5"/></g><g stroke="#9ba1ab" stroke-width="1.15" fill="none" stroke-linecap="round" stroke-linejoin="round"><path d="M471.2 700.6 L471.2 691.1000000000001 Q471.2 689.9000000000001 472.4 689.9000000000001 L476.6 689.9000000000001 L480.6 693.9000000000001 L480.6 700.6 Q480.6 701.8000000000001 479.4 701.8000000000001 L472.4 701.8000000000001 Q471.2 701.8000000000001 471.2 700.6 Z"/><path d="M476.6 689.9000000000001 L476.6 692.5000000000001 Q476.6 693.9000000000001 478 693.9000000000001 L480.6 693.9000000000001"/><path d="M468.7 692.5 L468.7 703.3000000000001 Q468.7 704.7 470.1 704.7 L477.8 704.7"/><path d="M474.2 697.5 L477.7 697.5 M474.2 699.5 L477.7 699.5"/></g><g stroke="#9ba1ab" stroke-width="1.15" fill="none" stroke-linecap="round" stroke-linejoin="round"><path d="M471.2 815.0 L471.2 805.5000000000001 Q471.2 804.3000000000001 472.4 804.3000000000001 L476.6 804.3000000000001 L480.6 808.3000000000001 L480.6 815.0 Q480.6 816.2 479.4 816.2 L472.4 816.2 Q471.2 816.2 471.2 815.0 Z"/><path d="M476.6 804.3000000000001 L476.6 806.9000000000001 Q476.6 808.3000000000001 478 808.3000000000001 L480.6 808.3000000000001"/><path d="M468.7 806.9 L468.7 817.7 Q468.7 819.1 470.1 819.1 L477.8 819.1"/><path d="M474.2 811.9 L477.7 811.9 M474.2 813.9 L477.7 813.9"/></g></svg>
<div class="a" style="left:819px;top:127px;width:840px;height:761px;background:#fff;border:1px solid #e9eaee;border-radius:4px;"></div>
<div class="a" style="left:833.3px;top:141.8px;width:46.8px;height:46.8px;border-radius:50%;background:#7ab9c6;color:#fff;font-size:21px;line-height:46.8px;text-align:center">N</div>
<div class="t" style="top:146.84px;font-size:14.6px;color:#2d3039;line-height:20px;letter-spacing:0.326px;left:892.20px;-webkit-text-stroke:0.22px currentColor;">Nikitha</div>
<div class="a" style="left:945px;top:147px;width:26px;height:17.5px;background:#fff;border:1px solid #e6e8ec;border-radius:3px;"></div>
<svg class="a" style="left:950px;top:150px;" width="16" height="12" viewBox="950 150 16 12"><g fill="#a7acb6"><circle cx="954.8" cy="155.4" r="1.15"/><circle cx="958" cy="155.4" r="1.15"/><circle cx="961.2" cy="155.4" r="1.15"/></g></svg>
<div class="t" style="top:167.93px;font-size:12.9px;color:#737984;line-height:20px;letter-spacing:-0.564px;left:892.20px;">A.N.M.</div>
<div class="a" style="left:820px;top:203px;width:838px;height:1px;background:#e6e8eb;"></div>
<div class="t" style="top:225.27px;font-size:14.8px;color:#737984;line-height:20px;letter-spacing:-0.095px;left:838.40px;">Review Cycle</div>
<div class="t" style="top:248.77px;font-size:14.8px;color:#2d3039;line-height:20px;letter-spacing:-0.099px;left:838.40px;-webkit-text-stroke:0.22px currentColor;">B- Test</div>
<div class="t" style="top:271.97px;font-size:14.8px;color:#2d3039;line-height:20px;letter-spacing:-0.353px;left:838.40px;-webkit-text-stroke:0.22px currentColor;">January 2025</div>
<div class="t" style="top:225.27px;font-size:14.8px;color:#737984;line-height:20px;letter-spacing:0.081px;left:1105.00px;">Reporting Manager</div>
<div class="t" style="top:248.77px;font-size:14.8px;color:#2d3039;line-height:20px;letter-spacing:-0.638px;left:1105.00px;-webkit-text-stroke:0.22px currentColor;">Rica</div>
<div class="t" style="top:225.27px;font-size:14.8px;color:#737984;line-height:20px;letter-spacing:0.186px;left:1372.00px;">Department</div>
<div class="t" style="top:248.70px;font-size:15.0px;color:#2d3039;line-height:20px;letter-spacing:0.051px;left:1372.00px;">Cloud Infra and App Modernization &gt;...</div>
<div class="t" style="top:314.77px;font-size:14.8px;color:#737984;line-height:20px;letter-spacing:0.020px;left:838.40px;">Location</div>
<div class="t" style="top:338.27px;font-size:14.8px;color:#2d3039;line-height:20px;letter-spacing:0.199px;left:838.40px;-webkit-text-stroke:0.22px currentColor;">99 - Hyderabad</div>
<div class="t" style="top:314.77px;font-size:14.8px;color:#737984;line-height:20px;letter-spacing:0.067px;left:1105.00px;">Due Date</div>
<div class="t" style="top:338.27px;font-size:14.8px;color:#2d3039;line-height:20px;letter-spacing:0.287px;left:1105.00px;-webkit-text-stroke:0.22px currentColor;">15 Aug 2025</div>
<div class="a" style="left:838px;top:378px;width:801px;height:1px;background:#e6e8eb;"></div>
<div class="t" style="top:402.86px;font-size:16px;color:#2d3039;line-height:20px;letter-spacing:0.170px;left:838.80px;">Below are the nominations made by Nikitha. Take action on them.</div>
<div class="a" style="left:838px;top:438px;width:801px;height:241px;background:#fff;border:1px solid #e9eaee;border-radius:3px;"></div>
<div class="a" style="left:839px;top:439px;width:799px;height:36px;background:#f1f2f4;"></div>
<div class="t" style="top:445.89px;font-size:11px;color:#3a3f48;line-height:20px;letter-spacing:0.047px;left:858.20px;-webkit-text-stroke:0.12px currentColor;">REVIEWER</div>
<div class="t" style="top:445.89px;font-size:11px;color:#3a3f48;line-height:20px;letter-spacing:0.443px;left:1058.00px;-webkit-text-stroke:0.12px currentColor;">RELATION</div>
<div class="t" style="top:445.89px;font-size:11px;color:#3a3f48;line-height:20px;letter-spacing:0.644px;left:1258.10px;-webkit-text-stroke:0.12px currentColor;">NOMINATED BY</div>
<div class="t" style="top:445.89px;font-size:11px;color:#3a3f48;line-height:20px;letter-spacing:0.634px;left:1457.70px;-webkit-text-stroke:0.12px currentColor;">ACTIONS</div>
<div class="t" style="top:490.24px;font-size:14.6px;color:#2d3039;line-height:20px;letter-spacing:0.157px;left:858.20px;-webkit-text-stroke:0.22px currentColor;">N Test</div>
<div class="t" style="top:513.19px;font-size:13.3px;color:#737984;line-height:20px;letter-spacing:0.048px;left:858.20px;">A C TECHNICIAN</div>
<div class="t" style="top:502.54px;font-size:14.6px;color:#2d3039;line-height:20px;letter-spacing:-0.159px;left:1058.00px;">Peers</div>
<div class="t" style="top:502.37px;font-size:14.8px;color:#2d3039;line-height:20px;letter-spacing:0.157px;left:1258.00px;">Nikitha</div>
<div class="t" style="top:502.37px;font-size:14.8px;color:#8bc57a;line-height:20px;letter-spacing:0.312px;left:1457.70px;">Approve</div>
<div class="t" style="top:502.44px;font-size:14.6px;color:#6a6bd6;line-height:20px;letter-spacing:-0.135px;left:1527.80px;">Reject</div>
<div class="a" style="left:839px;top:549px;width:799px;height:1px;background:#e9ebee;"></div>
<div class="a" style="left:839px;top:615px;width:799px;height:1px;background:#e6e8eb;"></div>
<div class="a" style="left:1524.6px;top:492.8px;width:53.2px;height:38.3px;background:transparent;border:3px solid #6f3fe0;"></div>
<div class="t" style="top:574.15px;font-size:14px;color:#4a4f58;line-height:20px;left:1526.70px;">of 1</div>
<div class="t" style="top:574.20px;font-size:15px;color:#c4c8ce;line-height:20px;left:1566.50px;">&#8250;</div>
<div class="t" style="top:574.55px;font-size:14px;color:#c4c8ce;line-height:20px;left:1597.00px;">&#8250;|</div>
<div class="t" style="top:637.84px;font-size:14.6px;color:#3a69c2;line-height:20px;letter-spacing:-0.015px;left:858.20px;">+ Reviewer</div>
<div class="t" style="top:799.14px;font-size:14.6px;color:#2d3039;line-height:20px;letter-spacing:0.056px;left:1425.20px;">SOB demo</div>
<div class="a" style="left:820px;top:830px;width:838px;height:1px;background:#e6e8eb;"></div>
<div class="a" style="left:1543px;top:840px;width:89px;height:37.5px;background:#3a69c2;border-radius:4px;"></div>
<div class="t" style="top:849.84px;font-size:14.6px;color:#fff;line-height:20px;letter-spacing:0.013px;left:1564.20px;">Submit</div>
<div class="a" style="left:1232px;top:524px;width:294px;height:171px;background:#fff;border-radius:2px;box-shadow:0 2px 4px rgba(0,0,0,.2),0 0 2px rgba(0,0,0,.1);"></div>
<div class="a" style="left:1249px;top:541.8px;width:260px;height:76px;background:#fff;border:3px solid #6f3fe0;"></div>
<div class="t" style="top:555.79px;font-size:15.6px;color:#2d3039;line-height:20px;letter-spacing:0.371px;left:1261.70px;">not the right one</div>
<svg class="a" style="left:1495px;top:603px;" width="12" height="12" viewBox="1495 603 12 12"><g stroke="#9aa0a9" stroke-width="0.9"><line x1="1498" y1="612" x2="1505" y2="605"/><line x1="1501.5" y1="612" x2="1505" y2="608.5"/></g></svg>
<div class="a" style="left:1317.3px;top:639.4px;width:88.5px;height:37.4px;background:#fff;border:1px solid #e1e3e7;border-radius:4px;"></div>
<div class="t" style="top:649.44px;font-size:14.6px;color:#2d3039;line-height:20px;letter-spacing:0.050px;left:1338.30px;">Cancel</div>
<div class="a" style="left:1413px;top:635px;width:101.7px;height:48.4px;background:transparent;border:3px solid #6f3fe0;"></div>
<div class="a" style="left:1417.8px;top:639.4px;width:89px;height:37.4px;background:#3a69c2;border-radius:5px;"></div>
<div class="t" style="top:649.37px;font-size:14.8px;color:#fff;line-height:20px;letter-spacing:0.204px;left:1444.30px;">Done</div>
<svg class="a" style="left:1260px;top:530px;" width="300" height="220" viewBox="1260 530 300 220"><line x1="1529" y1="582" x2="1543.8" y2="552.9" stroke="#6f3fe0" stroke-width="2.9" stroke-linecap="round"/><path d="M1548.5 543.5 L1548.7 557.6 L1537.0 551.7 Z" fill="#6f3fe0"/><line x1="1277" y1="663" x2="1291.6" y2="633.2" stroke="#6f3fe0" stroke-width="2.9" stroke-linecap="round"/><path d="M1296.2 623.8 L1296.6 637.9 L1284.8 632.1 Z" fill="#6f3fe0"/><line x1="1404" y1="739" x2="1418.7" y2="709.2" stroke="#6f3fe0" stroke-width="2.9" stroke-linecap="round"/><path d="M1423.3 699.8 L1423.7 713.9 L1411.9 708.1 Z" fill="#6f3fe0"/></svg>
<div class="t" style="top:577.79px;font-size:15.6px;color:#6f3fe0;line-height:20px;font-weight:700;left:1546.90px;">4</div>
<div class="t" style="top:667.99px;font-size:15.6px;color:#6f3fe0;line-height:20px;font-weight:700;left:1263.30px;">5</div>
<div class="t" style="top:722.49px;font-size:15.6px;color:#6f3fe0;line-height:20px;font-weight:700;left:1382.80px;">6</div>
<div class="a" style="left:0;top:0;width:1681px;height:1px;background:#fff"></div>
<div class="a" style="left:0;top:0;width:1px;height:909px;background:#a2b3c6"></div>
<div class="a" style="left:0;top:906px;width:1681px;height:2px;background:#b8cadf"></div>
<div class="a" style="left:0;top:908px;width:1681px;height:1px;background:#e3eaf2"></div>
<div class="a" style="left:1680px;top:0;width:1px;height:909px;background:#fff"></div>
</body></html>
